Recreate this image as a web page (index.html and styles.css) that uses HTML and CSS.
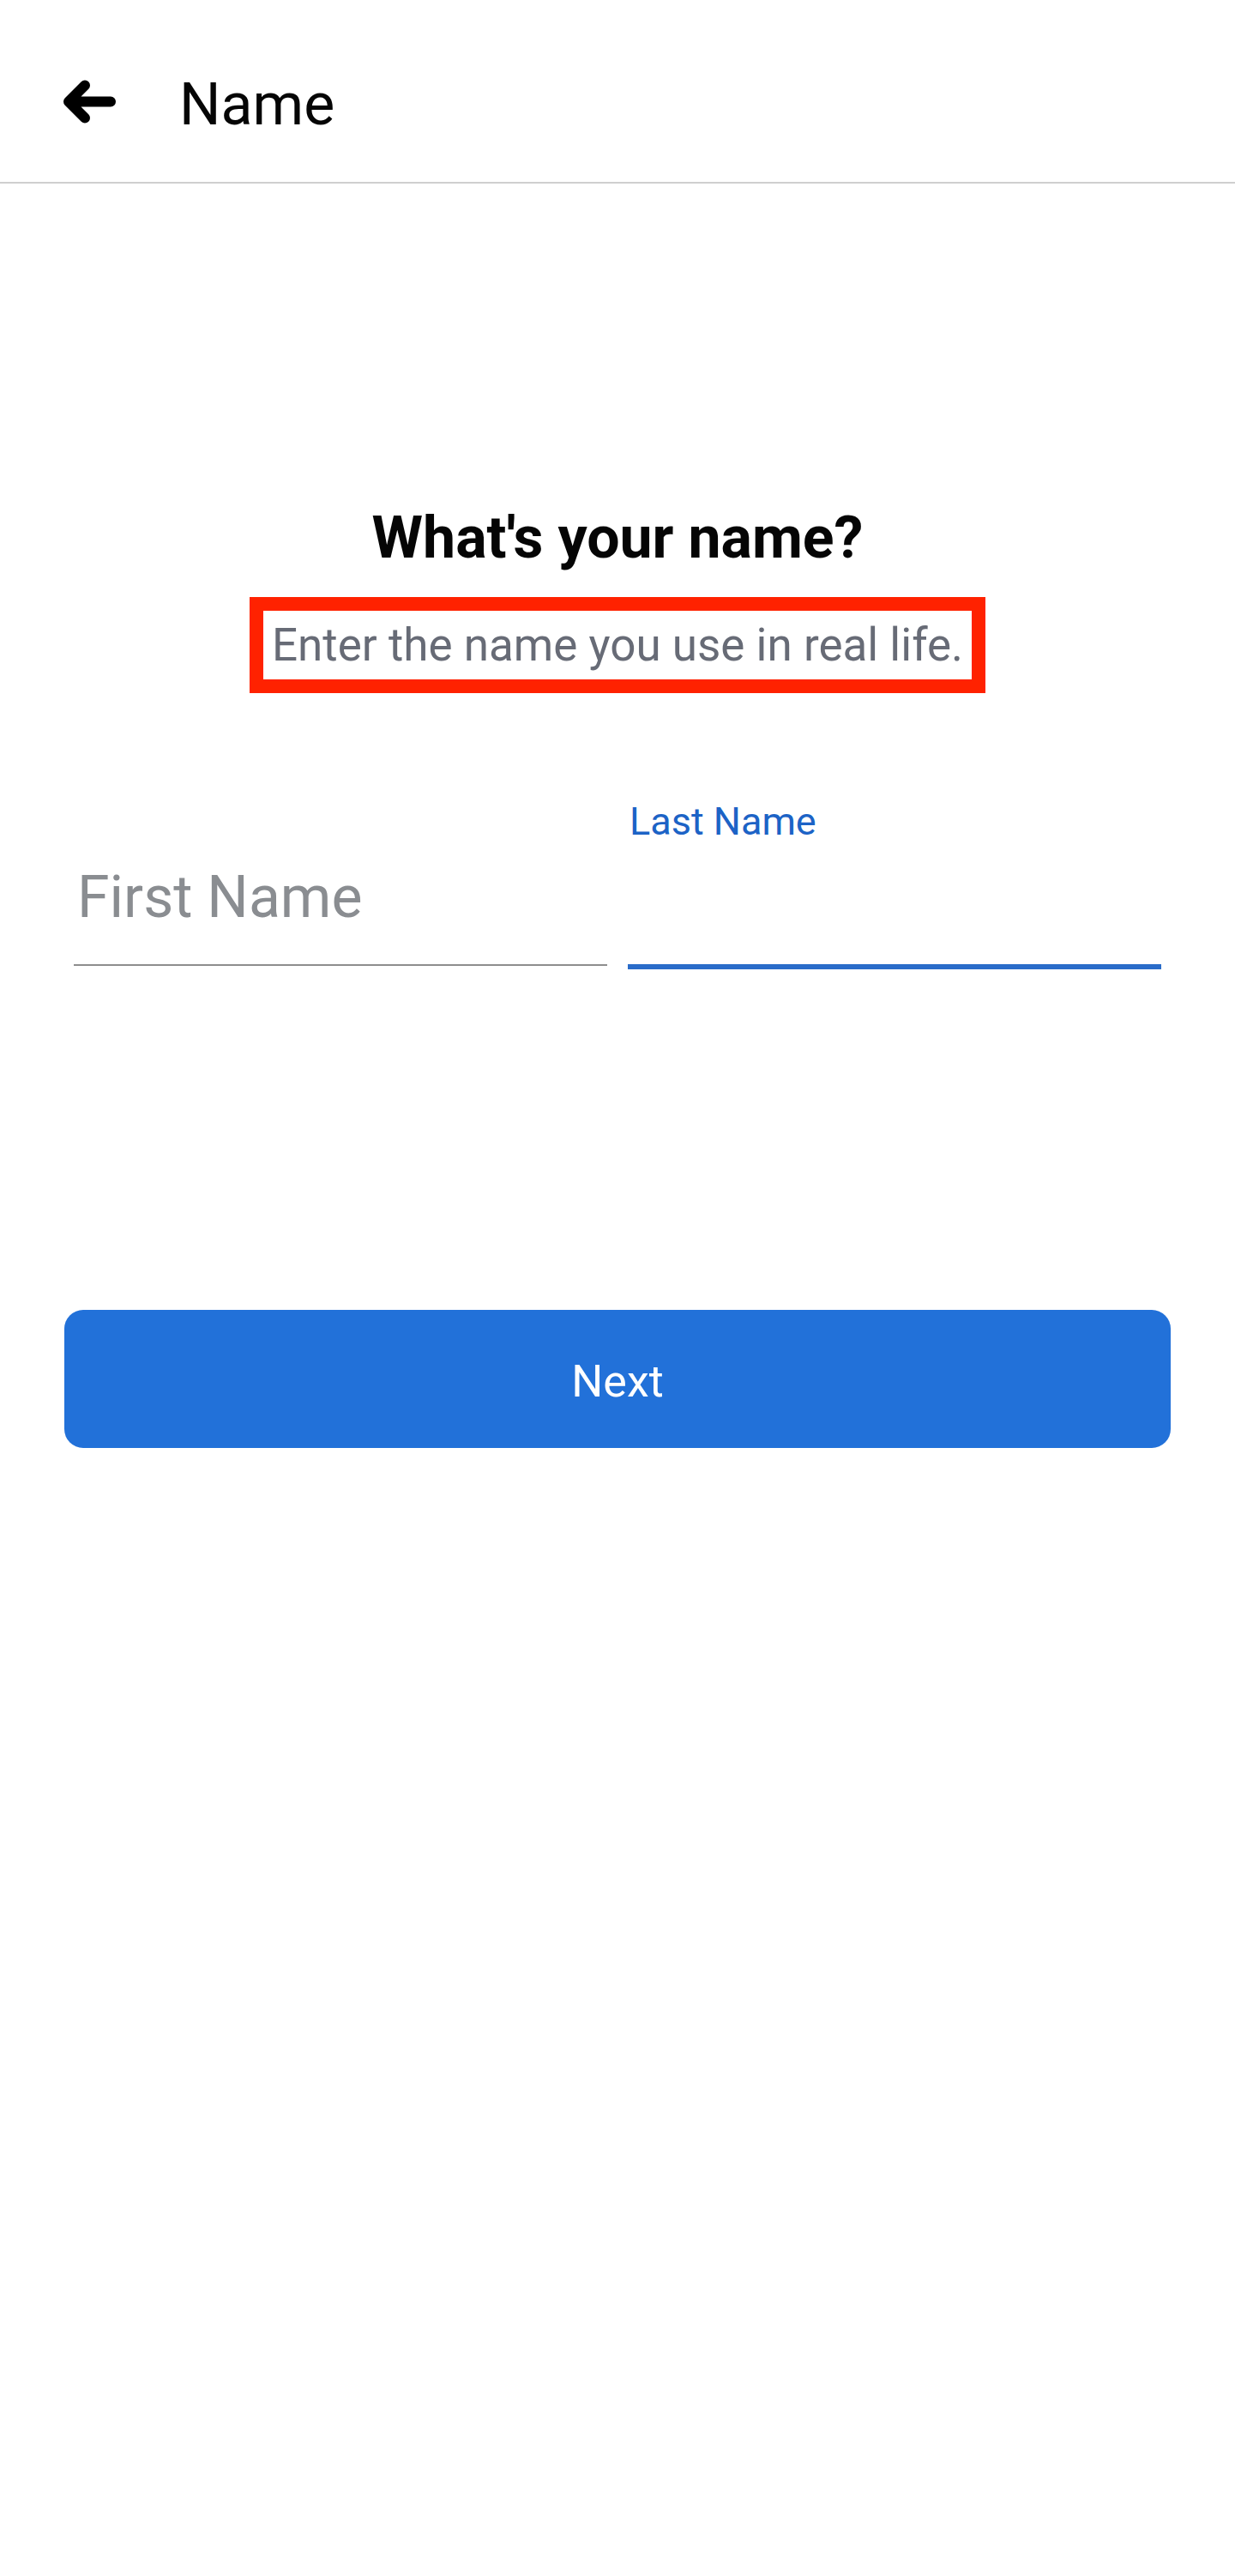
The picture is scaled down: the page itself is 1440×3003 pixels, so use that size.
FILE: index.html
```html
<!DOCTYPE html>
<html lang="en">
<head>
<meta charset="utf-8">
<title>Name</title>
<link rel="stylesheet" href="styles.css">
</head>
<body>
<header class="topbar">
  <svg class="back" width="70" height="66" viewBox="0 0 70 66" aria-hidden="true">
    <path d="M59 29.5 H10 M29 10.5 L10 29.5 L29 48.5" fill="none" stroke="#000" stroke-width="12" stroke-linecap="round" stroke-linejoin="round"/>
  </svg>
  <span class="topbar-title">Name</span>
</header>
<main class="content">
  <h1 class="title">What's your name?</h1>
  <p class="subtitle"><span class="highlight">Enter the name you use in real life.</span></p>
  <div class="fields">
    <div class="field">
      <div class="field-label"></div>
      <div class="field-input placeholder">First Name</div>
    </div>
    <div class="field field-active">
      <div class="field-label">Last Name</div>
      <div class="field-input"></div>
    </div>
  </div>
  <button class="next" type="button">Next</button>
</main>
</body>
</html>
```
FILE: styles.css
```css
html, body {
  margin: 0;
  padding: 0;
  background: #ffffff;
}
body {
  font-family: Roboto, "Liberation Sans", Arial, sans-serif;
  color: #050505;
}
.topbar {
  box-sizing: border-box;
  height: 214px;
  padding: 31px 0 0 70px;
  display: flex;
  align-items: center;
  border-bottom: 2px solid #cfcfcf;
}
.back {
  display: block;
  flex: none;
}
.topbar-title {
  margin-left: 69px;
  font-size: 68px;
  line-height: 80px;
  font-weight: 400;
  color: #050505;
}
.content {
  padding-top: 371px;
  display: flex;
  flex-direction: column;
  align-items: center;
}
.title {
  margin: 0;
  font-size: 68px;
  line-height: 84px;
  font-weight: 700;
  color: #050505;
}
.subtitle {
  margin: 27px 0 0;
  line-height: 0;
}
.highlight {
  display: inline-block;
  border: 16px solid #ff2200;
  padding: 0 10px;
  font-size: 53px;
  line-height: 80px;
  color: #676b76;
}
.fields {
  box-sizing: border-box;
  width: 100%;
  margin-top: 120px;
  padding: 0 86px;
  display: flex;
  align-items: flex-start;
  gap: 24px;
}
.field {
  flex: 1 1 0;
  padding-bottom: 38px;
  border-bottom: 2px solid #8e8e8e;
}
.field-active {
  border-bottom: 6px solid #2a6cc9;
}
.field-label {
  height: 60px;
  margin-bottom: 18px;
  padding-left: 2px;
  font-size: 45px;
  line-height: 60px;
  color: #1c63c6;
}
.field-input {
  height: 80px;
  padding-left: 4px;
  font-size: 68px;
  line-height: 80px;
}
.placeholder {
  color: #8a8d91;
}
.next {
  box-sizing: border-box;
  width: calc(100% - 150px);
  height: 161px;
  margin-top: 397px;
  border: 0;
  border-radius: 22px;
  background: #2271d9;
  color: #ffffff;
  font-family: Roboto, "Liberation Sans", Arial, sans-serif;
  font-size: 52px;
  font-weight: 400;
  padding: 6px 0 0;
}
```
